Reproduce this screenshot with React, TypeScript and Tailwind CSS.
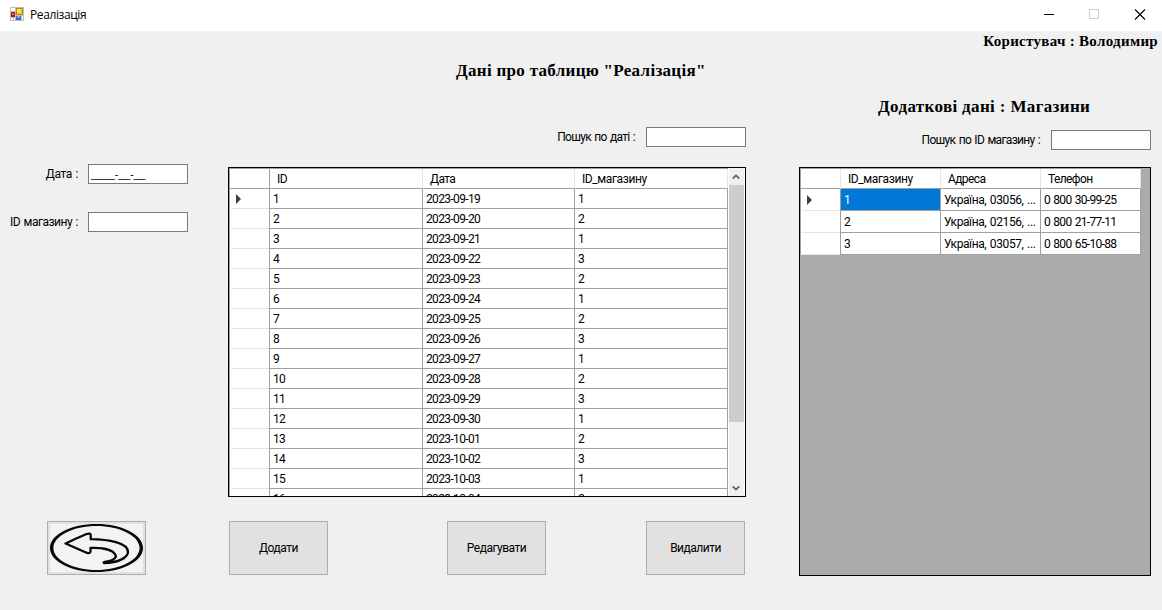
import React from 'react';

const sales: [string, string, string][] = [
  ['1', '2023-09-19', '1'],
  ['2', '2023-09-20', '2'],
  ['3', '2023-09-21', '1'],
  ['4', '2023-09-22', '3'],
  ['5', '2023-09-23', '2'],
  ['6', '2023-09-24', '1'],
  ['7', '2023-09-25', '2'],
  ['8', '2023-09-26', '3'],
  ['9', '2023-09-27', '1'],
  ['10', '2023-09-28', '2'],
  ['11', '2023-09-29', '3'],
  ['12', '2023-09-30', '1'],
  ['13', '2023-10-01', '2'],
  ['14', '2023-10-02', '3'],
  ['15', '2023-10-03', '1'],
  ['16', '2023-10-04', '2'],
];

const shops: [string, string, string][] = [
  ['1', 'Україна, 03056, ...', '0 800 30-99-25'],
  ['2', 'Україна, 02156, ...', '0 800 21-77-11'],
  ['3', 'Україна, 03057, ...', '0 800 65-10-88'],
];

function FormIcon() {
  return (
    <svg width="14" height="14" viewBox="0 0 14 14" shapeRendering="crispEdges">
      <rect width="14" height="14" fill="#bdbdbd" />
      <rect x="1" y="1" width="4" height="3" fill="#fff" />
      <rect x="1" y="11" width="2" height="2" fill="#fff" />
      <rect x="4" y="11" width="1" height="2" fill="#fff" />
      <rect x="12" y="9" width="1" height="4" fill="#fff" />
      <rect x="1" y="5" width="4" height="5" fill="#9c1c1c" />
      <rect x="2" y="6" width="2" height="2" fill="#dc6a62" />
      <rect x="6" y="1" width="7" height="7" fill="#b98a10" />
      <rect x="7" y="2" width="5" height="5" fill="#fcc733" />
      <rect x="7" y="2" width="3" height="3" fill="#ffe48a" />
      <rect x="6" y="9" width="5" height="4" fill="#3a68c4" />
      <rect x="7" y="9" width="3" height="2" fill="#7fa8ec" />
    </svg>
  );
}

function RowMarker() {
  return (
    <svg className="mt-px" width="5" height="10" viewBox="0 0 5 10">
      <path d="M0 0L5 5L0 10Z" fill="#404040" />
    </svg>
  );
}

function BackArrow() {
  return (
    <svg width="93" height="48" viewBox="0 0 93 48" fill="none" stroke="#080808">
      <path
        fill="#080808"
        stroke="none"
        fillRule="evenodd"
        d="M46.500 0C72 0 93 10.500 93 24S72 48 46.500 48S0 37.500 0 24S21 0 46.500 0ZM46.500 2C23.500 2 3.400 11.700 3.400 24S23.500 46 46.500 46S89.600 36.300 89.600 24S69.500 2 46.500 2Z"
      />
      <path
        strokeWidth="2.300"
        strokeLinejoin="round"
        d="M15.500 19.500C22 16.500 29 13 36 10.200C39 9.200 41 9.500 40.700 11.500V15.200C58 15.500 78 18.500 78 28C78 33 69 39 54 39C52.500 38.300 54.500 38 58 37.300C63 36.300 67 34 65.500 31C63 26 53 23.500 40.500 24V27.500C40.500 29.300 38 29.500 35.500 28.300C28.500 25.300 22 22.200 15.500 19.500Z"
      />
    </svg>
  );
}

function Input({ children }: { children?: React.ReactNode }) {
  return (
    <div className="h-5 w-[100px] shrink-0 border border-[#7a7a7a] bg-white pl-[2px] leading-[18px]">
      {children}
    </div>
  );
}

function Button({ children }: { children: React.ReactNode }) {
  return (
    <button className="flex h-[54px] w-[99px] items-center justify-center border border-[#adadad] bg-[#e1e1e1] tracking-[-0.5px]">
      {children}
    </button>
  );
}

const heading = "font-['Liberation_Serif',serif] font-bold whitespace-nowrap [word-spacing:0px]";

export default function App() {
  return (
    <div className="flex h-[610px] w-[1162px] flex-col overflow-hidden bg-[#f0f0f0] font-[Roboto,sans-serif] text-[12px] tracking-[-0.6px] text-black [word-spacing:1px]">
      <header className="flex h-[31px] shrink-0 items-center bg-white pl-[10px]">
        <div className="-mt-[3px]"><FormIcon /></div>
        <span className="ml-[6px] -mt-px font-['Open_Sans',sans-serif] text-[12px] tracking-[-0.4px]">Реалізація</span>
        <svg className="ml-auto mr-[16px] -mt-[3px]" width="102" height="11" viewBox="0 0 102 11" fill="none">
          <path d="M0 5.500H10" stroke="#000" />
          <path d="M45.500 .5H54.500V9.500H45.500Z" stroke="#ccc" />
          <path d="M91 .5L101 10.500M101 .5L91 10.500" stroke="#000" strokeWidth="1.100" />
        </svg>
      </header>

      <main className="flex flex-1">
        <section className="flex w-[228px] shrink-0 flex-col pt-[133px]">
          <label className="flex items-center">
            <span className="mr-[10px] w-[78px] text-right whitespace-nowrap tracking-[-0.4px]">Дата :</span>
            <Input>
              <span className="font-['Liberation_Sans',sans-serif] text-[11px] tracking-[-0.2px]">____-__-__</span>
            </Input>
          </label>
          <label className="mt-7 flex items-center">
            <span className="mr-[10px] w-[78px] text-right whitespace-nowrap tracking-[-0.5px]">ID магазину :</span>
            <Input />
          </label>
          <button className="mt-[289px] ml-[47px] flex h-[54px] w-[99px] items-center justify-center border border-[#adadad] bg-[#e1e1e1]">
            <span className="bg-[#f3f3f3]"><BackArrow /></span>
          </button>
        </section>

        <section className="flex w-[518px] shrink-0 flex-col">
          <h1 className={`${heading} mt-[29px] ml-[228px] text-[17px] leading-[22px] tracking-[0.3px]`}>
            Дані про таблицю "Реалізація"
          </h1>
          <label className="mt-[45px] flex items-center justify-end">
            <span className="mr-[11px] whitespace-nowrap tracking-[-0.7px]">Пошук по даті :</span>
            <Input />
          </label>
          <div className="mt-5 flex h-[330px] overflow-hidden border border-black bg-white">
            <div className="w-[499px] border-t border-l border-[#a0a0a0]">
              <div className="grid h-5 grid-cols-[40px_153px_152px_153px] grid-rows-[20px] leading-[20px]">
                <div className="border-r border-b border-[#a0a0a0]" />
                <div className="border-r border-b border-r-[#e5e5e5] border-b-[#a0a0a0] pl-[7px]">ID</div>
                <div className="border-r border-b border-r-[#e5e5e5] border-b-[#a0a0a0] pl-[7px]">Дата</div>
                <div className="border-r border-b border-r-[#e5e5e5] border-b-[#a0a0a0] pl-[7px] tracking-[-0.4px]">
                  ID_магазину
                </div>
              </div>
              {sales.map((row, i) => (
                <div
                  key={row[0]}
                  className="grid h-5 grid-cols-[40px_153px_152px_153px] grid-rows-[20px] leading-[20px]"
                >
                  <div className="flex border-r border-[#a0a0a0] pl-px">
                    <div className="flex flex-1 items-center border-b border-[#e5e5e5] pl-[5px]">
                      {i === 0 && <RowMarker />}
                    </div>
                  </div>
                  {row.map((cell, c) => (
                    <div key={c} className="border-r border-b border-[#a0a0a0] pl-[3px] tracking-[-0.65px]">
                      {cell}
                    </div>
                  ))}
                </div>
              ))}
            </div>
            <div className="ml-px flex w-[15px] flex-col items-center bg-[#f0f0f0]">
              <svg className="mt-[6px]" width="9" height="6" viewBox="0 0 9 6" fill="none">
                <path d="M.7 4.700L4 1.400L7.300 4.700" stroke="#606060" strokeWidth="1.800" />
              </svg>
              <div className="mt-[5px] h-[237px] w-[15px] bg-[#cdcdcd]" />
              <svg className="mt-[63px]" width="9" height="6" viewBox="0 0 9 6" fill="none">
                <path d="M.7 1.300L4 4.600L7.300 1.300" stroke="#606060" strokeWidth="1.800" />
              </svg>
            </div>
          </div>
          <div className="mt-6 flex px-px">
            <Button>Додати</Button>
            <div className="mr-[100px] ml-[119px]"><Button>Редагувати</Button></div>
            <Button>Видалити</Button>
          </div>
        </section>

        <section className="flex flex-1 flex-col pr-[11px] pl-[53px]">
          <p className={`${heading} -mr-[7px] self-end text-[15px] leading-5 tracking-[0.3px]`}>Користувач : Володимир</p>
          <h2 className={`${heading} mt-[45px] ml-[79px] text-[17px] leading-[22px] tracking-[0.36px]`}>
            Додаткові дані : Магазини
          </h2>
          <label className="mt-3 flex items-center justify-end">
            <span className="mr-[11px] whitespace-nowrap tracking-[-0.69px]">Пошук по ID магазину :</span>
            <Input />
          </label>
          <div className="mt-[17px] h-[409px] border border-black bg-[#ababab]">
            <div className="w-[341px] border-t border-l border-[#a0a0a0] bg-white">
              <div className="grid h-5 grid-cols-[40px_100px_100px_100px] grid-rows-[20px] leading-[20px]">
                <div className="border-r border-b border-r-[#e5e5e5] border-b-[#a0a0a0]" />
                <div className="border-r border-b border-r-[#e5e5e5] border-b-[#a0a0a0] pl-[7px] tracking-[-0.4px]">
                  ID_магазину
                </div>
                <div className="border-r border-b border-r-[#e5e5e5] border-b-[#a0a0a0] pl-[7px]">Адреса</div>
                <div className="border-r border-b border-r-[#e5e5e5] border-b-[#a0a0a0] pl-[7px]">Телефон</div>
              </div>
              {shops.map((row, i) => (
                <div
                  key={row[0]}
                  className="grid h-[22px] grid-cols-[40px_100px_100px_100px] grid-rows-[22px] leading-[22px]"
                >
                  <div className="flex border-r border-[#a0a0a0] pl-px">
                    <div className="flex flex-1 items-center border-b border-[#e5e5e5] pl-[5px]">
                      {i === 0 && <RowMarker />}
                    </div>
                  </div>
                  {row.map((cell, c) => (
                    <div
                      key={c}
                      className={`border-r border-b border-[#a0a0a0] pl-[3px] whitespace-nowrap ${
                        c === 1 ? 'tracking-[-0.4px]' : 'tracking-[-0.7px]'
                      } ${i === 0 && c === 0 ? 'bg-[#0078d7] text-white' : ''}`}
                    >
                      {cell}
                    </div>
                  ))}
                </div>
              ))}
            </div>
          </div>
        </section>
      </main>
    </div>
  );
}
